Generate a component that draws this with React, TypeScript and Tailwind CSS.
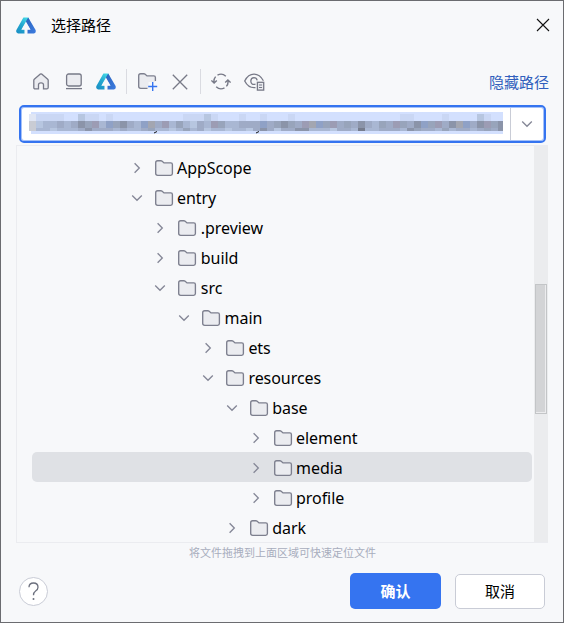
import React from "react";

type Row = { name: string; level: number; open?: boolean; selected?: boolean };

const rows: Row[] = [
  { name: "AppScope", level: 0 },
  { name: "entry", level: 0, open: true },
  { name: ".preview", level: 1 },
  { name: "build", level: 1 },
  { name: "src", level: 1, open: true },
  { name: "main", level: 2, open: true },
  { name: "ets", level: 3 },
  { name: "resources", level: 3, open: true },
  { name: "base", level: 4, open: true },
  { name: "element", level: 5 },
  { name: "media", level: 5, selected: true },
  { name: "profile", level: 5 },
  { name: "dark", level: 4 },
];

// Redacted path: one colour per 7px tile; indexes refer to the palette.
const palette = ["#d3e0fe", "#cad7f4", "#b7c6e0", "#a9b7d3", "#9fabc6", "#98a4bb", "#8b94a9", "#9c9cb4", "#8fa1c6", "#c9ccd4", "#e0e6f4", "#a3a6b1", "#767c8d"];
const mosaicTop = "a1111002110100000000001112100010010001000000000000000110000100002100";
const mosaicMid = "92334346573856438b4735324375334448456547b85745464354754685746b846756";
const mosaicLow = "93323334644434334533235342332332464244663332443c33444365443534434546";

function tileColor(c: string) {
  return palette[parseInt(c, 16)];
}

function Tiles({ cells, className }: { cells: string; className: string }) {
  return (
    <div className={"flex w-[474px] overflow-hidden " + className}>
      {cells.split("").map((c, i) => (
        <span key={i} className="h-full w-[7px] shrink-0" style={{ background: tileColor(c) }} />
      ))}
    </div>
  );
}

function Logo() {
  return (
    <svg width="20" height="17" viewBox="0 0 20 17" className="shrink-0">
      <defs>
        <linearGradient id="lg" x1="0.8" y1="0" x2="0.2" y2="1">
          <stop offset="0" stopColor="#45dce8" />
          <stop offset="0.5" stopColor="#24a8cf" />
          <stop offset="1" stopColor="#1a91c6" />
        </linearGradient>
        <linearGradient id="rg" x1="0" y1="0" x2="1" y2="1">
          <stop offset="0" stopColor="#2a63bd" />
          <stop offset="1" stopColor="#3d7ce0" />
        </linearGradient>
      </defs>
      <path d="M7.4 0.5H12.2L14 3.8L10 4.5L5.3 12.7H8.6V16.5H2Q-.6 15.6.4 12.9Z" fill="url(#lg)" />
      <path d="M12.2 .5L19.6 13Q20.4 15.7 18 16.5H11.4V12.7H14.6L9.9 4.5Z" fill="url(#rg)" />
      <path d="M10 5.8L14 12.2H11.2V16.5H8.8V12.2H6Z" fill="#f7f8fa" />
    </svg>
  );
}

function Folder({ plus = false }: { plus?: boolean }) {
  return (
    <svg width="20" height="18" viewBox="0 0 20 18" fill="none" className="shrink-0 overflow-visible">
      <path d="M.7 2.7Q.7.7 2.7.7H5.8Q6.6.7 7.2 1.2L9 2.9H15.8Q17.4 2.9 17.4 4.6V13.5Q17.4 15.3 15.6 15.3H2.7Q.7 15.3.7 13.5Z" fill="#ebecf0" />
      <path d={plus
        ? "M9.5 15.3H2.7Q.7 15.3.7 13.5V2.7Q.7.7 2.7.7H5.8Q6.6.7 7.2 1.2L9 2.9H15.8Q17.4 2.9 17.4 4.6V8"
        : "M.7 2.7Q.7.7 2.7.7H5.8Q6.6.7 7.2 1.2L9 2.9H15.8Q17.4 2.9 17.4 4.6V13.5Q17.4 15.3 15.6 15.3H2.7Q.7 15.3.7 13.5Z"} stroke="#7d7f8e" strokeWidth="1.35" />
      {plus && <>
        <path d="M10.5 9H20V18H10.5Z" fill="#f7f8fa" />
        <path d="M14.7 9V18M10.2 13.5H19.2" stroke="#3574f0" strokeWidth="1.4" />
      </>}
    </svg>
  );
}

function Chevron({ open = false }: { open?: boolean }) {
  return (
    <svg width="12" height="12" viewBox="0 0 12 12" fill="none" stroke="#858797" strokeWidth="1.35" className="shrink-0">
      <path d={open ? "M1.2 3.6L6 8.2L10.8 3.6" : "M3.6 1.2L8.3 6L3.6 10.8"} />
    </svg>
  );
}

export default function App() {
  return (
    <div className="h-[623px] w-[564px] overflow-hidden border border-[#6b6c70] bg-[#f7f8fa] font-['Noto_Sans','Noto_Sans_CJK_SC',sans-serif] text-black">
      <header className="flex h-[48px] items-center pr-[13px] pl-[15px]">
        <Logo />
        <h1 className="ml-[15px] flex-1 font-['Noto_Sans_CJK_SC',sans-serif] text-[15px] leading-6">选择路径</h1>
        <svg width="14" height="14" viewBox="0 0 14 14" stroke="#111" strokeWidth="1.1"><path d="M1 1L13 13M13 1L1 13" /></svg>
      </header>

      <div className="mt-[20px] flex h-[25px] items-center pr-[14px] pl-[32px]">
        <svg width="16" height="17" viewBox="0 0 16 17" fill="#ebecf0" stroke="#777987" strokeWidth="1.3">
          <path d="M.8 7.3Q.8 6.7 1.3 6.2L7.3 1.1Q8 .6 8.7 1.1L14.7 6.2Q15.2 6.7 15.2 7.3V14.4Q15.2 15.9 13.8 15.9H10.5V11.8Q10.5 9.8 8 9.8T5.5 11.8V15.9H2.2Q.8 15.9.8 14.4Z" />
        </svg>
        <svg width="18" height="17" viewBox="0 0 18 17" fill="#ebecf0" stroke="#777987" strokeWidth="1.3" className="ml-4">
          <rect x="1.6" y="1" width="14.6" height="12" rx="2" />
          <path d="M1 15.6H17" />
        </svg>
        <div className="ml-[13px] flex"><Logo /></div>
        <div className="ml-[10px] h-[25px] w-px bg-[#dadbe1]" />
        <div className="mt-[1px] ml-[11px] flex"><Folder plus /></div>
        <svg width="16" height="16" viewBox="0 0 16 16" stroke="#777987" strokeWidth="1.3" className="ml-[14px]"><path d="M.8 .8L15.2 15.2M15.2 .8L.8 15.2" /></svg>
        <div className="ml-[12px] h-[25px] w-px bg-[#dadbe1]" />
        <svg width="20" height="17" viewBox="0 0 20 17" fill="none" stroke="#777987" strokeWidth="1.4" className="ml-[10px]">
          <path d="M6.5 2.1A7.2 7.2 0 0 1 14.8 3.2M3.1 9.8Q2.4 6.2 4.6 3.6M13.5 14.9A7.2 7.2 0 0 1 5.2 13.8M16.9 7.2Q17.6 10.8 15.4 13.4M.4 7.4L3.1 10L5.8 7.4M14.2 9.6L16.9 7L19.6 9.6" />
        </svg>
        <svg width="21" height="18" viewBox="0 0 21 18" fill="none" stroke="#777987" strokeWidth="1.3" className="ml-[13px]">
          <path d="M11.5 14.6Q4.6 15.5.7 8Q4.2 1.2 10 1.2T19.4 7.8" />
          <path d="M11.5 11.2Q7 12.4 6.8 8Q7 4.8 10 4.7Q12.5 4.8 13.2 7.4" />
          <rect x="13.4" y="9.3" width="6.3" height="7.8" fill="#ebecf0" />
          <path d="M15 12H18.1M15 14.5H18.1" strokeWidth="1.1" />
        </svg>
        <a className="ml-auto font-['Noto_Sans_CJK_SC',sans-serif] text-[15px] leading-5 text-[#315fbd]">隐藏路径</a>
      </div>

      <div className="mt-[11px] ml-[18px] flex h-[38px] w-[527px] rounded-[5px] border-2 border-[#3574f0] bg-white shadow-[inset_0_0_0_1px_#a5c1f8]">
        <div className="flex flex-1 pt-[5px] pl-[8px]">
          <div className="h-[22px] w-[474px] bg-linear-to-r from-white from-[2px] to-[#d3e0fe] to-[2px]">
            <Tiles cells={mosaicTop} className="mt-[2px] h-[7px]" />
            <Tiles cells={mosaicMid} className="h-[7px]" />
            <Tiles cells={mosaicLow} className="h-[3px]" />
            <svg width="474" height="3" viewBox="0 0 474 3" className="block" stroke="#151515" strokeWidth="1" fill="none"><path d="M125 2L128 .5M227 2L230 .5" /></svg>
          </div>
        </div>
        <div className="my-px flex w-[34px] items-center justify-center border-l border-[#c9ccd6] pr-px"><Chevron open /></div>
      </div>

      <main className="mt-[2px] ml-[15px] flex h-[398px] w-[532px] overflow-hidden border border-r-0 border-[#ebecf0]">
        <div className="flex-1 pt-[6px] pl-[15px]">
          {rows.map((r) => (
            <div key={r.name} className={"flex h-[30px] w-[500px] items-center rounded-[5px] " + (r.selected ? "bg-[#dfe1e5]" : "")}>
              <div className="shrink-0" style={{ width: 98.5 + r.level * 23.8 }} />
              <div className="mt-[1px] flex"><Chevron open={r.open} /></div>
              <div className="mt-[3px] ml-[12px] flex"><Folder /></div>
              <span className="mt-[2px] ml-[2.5px] text-[16px] leading-[30px] tracking-[-0.05px]">{r.name}</span>
            </div>
          ))}
        </div>
        <div className="h-full w-[14px] bg-[#ebecee] px-px pt-[138px]">
          <div className="h-[130px] w-[12px] border border-[#c3c5c7] bg-[#d3d4d6] shadow-[inset_-1px_-1px_0_#ececee]" />
        </div>
      </main>

      <p className="h-[18px] pl-px text-center font-['Noto_Sans_CJK_SC',sans-serif] text-[11px] leading-[18px] text-[#a8adbd]">将文件拖拽到上面区域可快速定位文件</p>

      <footer className="mt-[12px] flex h-[36px] items-center pr-[18px] pl-[18px]">
        <button className="flex size-[29px] items-center justify-center rounded-full border border-[#c9ccd6] bg-white">
          <svg width="11" height="19" viewBox="0 0 11 19" fill="none" stroke="#6c707e" strokeWidth="1.3">
            <path d="M1 5.2Q1 1 5.5 1T10 5.2Q10 7.4 7.6 9Q5.5 10.4 5.5 13.3" />
            <circle cx="5.5" cy="17" r="1" fill="#6c707e" stroke="none" />
          </svg>
        </button>
        <button className="ml-auto h-[36px] w-[91px] rounded-[5px] bg-[#3574f0] pt-px font-['Noto_Sans_CJK_SC',sans-serif] text-[15px] font-bold text-white">确认</button>
        <button className="ml-[14px] h-[35px] w-[90px] rounded-[5px] border border-[#c9ccd6] bg-white pt-px font-['Noto_Sans_CJK_SC',sans-serif] text-[15px]">取消</button>
      </footer>
    </div>
  );
}
